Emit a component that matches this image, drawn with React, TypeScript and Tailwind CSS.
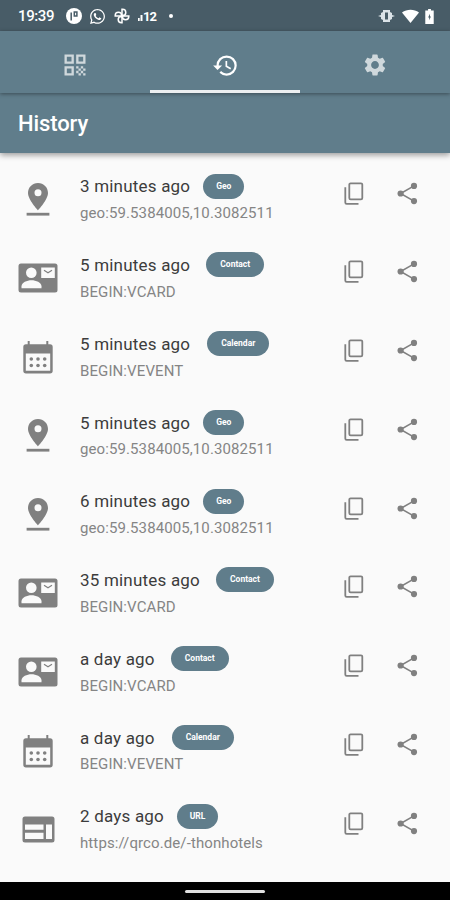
import type { ReactNode } from "react";
import { MdHistory, MdQrCode, MdSettings } from "react-icons/md";
import { FaWhatsapp } from "react-icons/fa";

type Kind = "Geo" | "Contact" | "Calendar" | "URL";

const entries: { time: string; kind: Kind; content: string }[] = [
  { time: "3 minutes ago", kind: "Geo", content: "geo:59.5384005,10.3082511" },
  { time: "5 minutes ago", kind: "Contact", content: "BEGIN:VCARD" },
  { time: "5 minutes ago", kind: "Calendar", content: "BEGIN:VEVENT" },
  { time: "5 minutes ago", kind: "Geo", content: "geo:59.5384005,10.3082511" },
  { time: "6 minutes ago", kind: "Geo", content: "geo:59.5384005,10.3082511" },
  { time: "35 minutes ago", kind: "Contact", content: "BEGIN:VCARD" },
  { time: "a day ago", kind: "Contact", content: "BEGIN:VCARD" },
  { time: "a day ago", kind: "Calendar", content: "BEGIN:VEVENT" },
  { time: "2 days ago", kind: "URL", content: "https://qrco.de/-thonhotels" },
];

const PinIcon = () => (
  <svg className="w-6 h-[33px]" viewBox="0 0 24 33" fill="currentColor">
    <path
      fillRule="evenodd"
      d="M12 0C6.300 0 2 4.400 2 10c0 6.800 10 17.300 10 17.300S22 16.800 22 10C22 4.400 17.700 0 12 0zm0 13.200a3.500 3.500 0 110-7 3.500 3.500 0 010 7z"
    />
    <path d="M.6 29.800h22.800v2.800H.6z" />
  </svg>
);

const ContactIcon = () => (
  <svg className="w-[40px] h-[30px]" viewBox="0 0 40 30">
    <rect x="0.5" y="0.5" width="39" height="29" rx="2.5" fill="currentColor" />
    <circle cx="13.3" cy="9.8" r="5.3" fill="#fafafa" />
    <path d="M3.5 25.3v-2c0-3.800 5.500-6 10-6s10 2.200 10 6v2z" fill="#fafafa" />
    <path d="M23.200 4.500h13.600v10.500H23.200z" fill="#fafafa" />
    <path d="M26 7.300l4 2.400 4-2.400" fill="none" stroke="currentColor" strokeWidth="1.300" />
  </svg>
);

const CalendarIcon = () => (
  <svg className="w-[30px] h-[34px]" viewBox="0 0 30 34" fill="currentColor">
    <path
      fillRule="evenodd"
      d="M4.700 1h2v3.300h16.600V1h2v3.300H27a2.700 2.700 0 012.700 2.700V30.800a2.700 2.700 0 01-2.700 2.700H3A2.700 2.700 0 01.3 30.800V7A2.700 2.700 0 013 4.300h1.700zM2.800 13.500V30.800h24.400V13.500z"
    />
    {[8.3, 15, 21.7].map((x) => (
      <g key={x}>
        <circle cx={x} cy="19" r="1.800" />
        <circle cx={x} cy="25.500" r="1.800" />
      </g>
    ))}
  </svg>
);

const WebIcon = () => (
  <svg className="w-[33px] h-[27px]" viewBox="0 0 33 27">
    <path
      fill="currentColor"
      fillRule="evenodd"
      d="M3 .500h27A2.500 2.500 0 0132.500 3v21a2.500 2.500 0 01-2.500 2.500H3A2.500 2.500 0 01.5 24V3A2.500 2.500 0 013 .500zM3 8.500v5.300h18.500V8.500zM3 16.800v6.200h18.500v-6.200zM24 8.500V23h6V8.500z"
    />
  </svg>
);

const CopyIcon = () => (
  <svg className="w-5 h-[23px]" viewBox="0 0 20 23" fill="none" stroke="currentColor" strokeWidth="1.800">
    <rect x="5.300" y="1.300" width="13" height="16" rx="1.300" />
    <path d="M1.300 5.300V20.500a1.300 1.300 0 001.300 1.300H14.500" />
  </svg>
);

const ShareIcon = () => (
  <svg className="w-[21px] h-[23px]" viewBox="0 0 21 23" fill="currentColor">
    <circle cx="3.600" cy="11.500" r="3.100" />
    <circle cx="17" cy="3.900" r="3.100" />
    <circle cx="17" cy="19.100" r="3.100" />
    <path d="M17 3.900L3.600 11.500 17 19.100" fill="none" stroke="currentColor" strokeWidth="1.600" />
  </svg>
);

const kinds: Record<Kind, { icon: ReactNode; chip: string }> = {
  Geo: { icon: <PinIcon />, chip: "ml-[13px] w-[41px]" },
  Contact: { icon: <ContactIcon />, chip: "ml-[16px] w-[58px]" },
  Calendar: { icon: <CalendarIcon />, chip: "ml-[17px] w-[62px]" },
  URL: { icon: <WebIcon />, chip: "ml-[13px] w-[41px]" },
};

function StatusBar() {
  return (
    <div className="h-[31px] bg-[#485c67] flex items-center pt-px pl-[18px] pr-[16px] text-white">
      <span className="text-[15px] font-medium tracking-[-0.4px] w-[48px]">19:39</span>
      <svg className="w-4 h-4" viewBox="0 0 16 16">
        <circle cx="8" cy="8" r="8" fill="currentColor" />
        <path d="M5.200 12.500V4.500M8.300 4h2.600v4H8.300z" fill="none" stroke="#485c67" strokeWidth="1.500" />
      </svg>
      <FaWhatsapp className="w-[17px] h-[17px] ml-[7px]" />
      <svg className="w-4 h-4 ml-2" viewBox="0 0 16 16" fill="none" stroke="currentColor" strokeWidth="1.500">
        {[0, 90, 180, 270].map((angle) => (
          <path key={angle} d="M8 8V1.200h.6a3.200 3.200 0 010 6.400z" transform={`rotate(${angle} 8 8)`} />
        ))}
      </svg>
      <span className="ml-2 text-[13px] font-bold tracking-[-0.9px] flex items-end leading-none">
        <svg className="w-[5px] h-[7px] mb-[2px]" viewBox="0 0 5 7" fill="currentColor">
          <path d="M0 4h1.700v3H0zM2.500 1h2v6h-2z" />
        </svg>
        12
      </span>
      <span className="ml-[13px] w-1 h-1 rounded-full bg-white" />
      <div className="ml-auto flex items-center">
        <svg className="w-[17px] h-[14px]" viewBox="0 0 17 14" fill="#dbe3e8">
          <path fillRule="evenodd" d="M5 1h7v2l2 1v2l3 1-3 1v2l-2 1v2H5v-2l-2-1V8L0 7l3-1V4l2-1zM7 3.500v7h3v-7z" />
        </svg>
        <svg className="w-[17px] h-[14px] ml-[7px]" viewBox="0 0 17 14" fill="currentColor">
          <path d="M0 3.500C5-.3 12-.3 17 3.500L8.500 14z" />
        </svg>
        <svg className="w-[9px] h-[15px] ml-[6px]" viewBox="0 0 9 16">
          <path d="M3 0h3v1.500h3V16H0V1.500h3z" fill="currentColor" />
          <path d="M5 5L3 9h1.200v3L6 8H5z" fill="#485c67" />
        </svg>
      </div>
    </div>
  );
}

export default function App() {
  return (
    <div className="w-[450px] h-[900px] flex flex-col bg-[#fafafa] font-['Roboto',sans-serif] overflow-hidden">
      <StatusBar />
      <nav className="h-[62px] shrink-0 bg-[#607d8b] flex text-white z-20 shadow-[0_1px_4px_rgba(0,0,0,0.4)]">
        <div className="flex-1 flex items-center justify-center pt-[9px] border-b-[3px] border-transparent">
          <MdQrCode className="w-7 h-7 text-[#cfd8dc]" />
        </div>
        <div className="flex-1 flex items-center justify-center pt-[9px] border-b-[3px] border-[#eceff1]">
          <MdHistory className="w-[27px] h-[27px]" />
        </div>
        <div className="flex-1 flex items-center justify-center pt-[9px] border-b-[3px] border-transparent">
          <MdSettings className="w-[26px] h-[26px] text-[#cfd8dc]" />
        </div>
      </nav>
      <header className="h-[60px] shrink-0 bg-[#607d8b] flex items-center px-[18px] z-10 shadow-[0_2px_6px_rgba(0,0,0,0.4)]">
        <h1 className="text-[22px] font-medium tracking-[-0.1px] text-white">History</h1>
      </header>

      <main className="flex-1 pt-[7px] text-[#808080]">
        {entries.map((entry, index) => (
          <div key={index} className="h-[78.75px] flex pl-[18px] pr-[32px]">
            <div className="w-[40px] h-full flex items-center justify-center">{kinds[entry.kind].icon}</div>
            <div className="flex-1 ml-[22px] pt-[14px]">
              <div className="flex items-center h-6">
                <span className="pt-[2px] text-[17px] tracking-[0.2px] text-[#3c3c3c] whitespace-nowrap">
                  {entry.time}
                </span>
                <span
                  className={`h-[25px] shrink-0 rounded-full bg-[#607d8b] text-white text-[8.5px] font-bold flex items-center justify-center ${kinds[entry.kind].chip}`}>
                  {entry.kind}
                </span>
              </div>
              <p className="text-[15px] leading-5 mt-[5px] tracking-[0.1px] text-[#858585] whitespace-nowrap">
                {entry.content}
              </p>
            </div>
            <div className="flex items-center h-[66px] gap-[33px]">
              <CopyIcon />
              <ShareIcon />
            </div>
          </div>
        ))}
      </main>

      <footer className="h-[18px] shrink-0 bg-black flex justify-center items-center">
        <div className="w-20 h-[3px] rounded-full bg-[#e0e0e0]" />
      </footer>
    </div>
  );
}
